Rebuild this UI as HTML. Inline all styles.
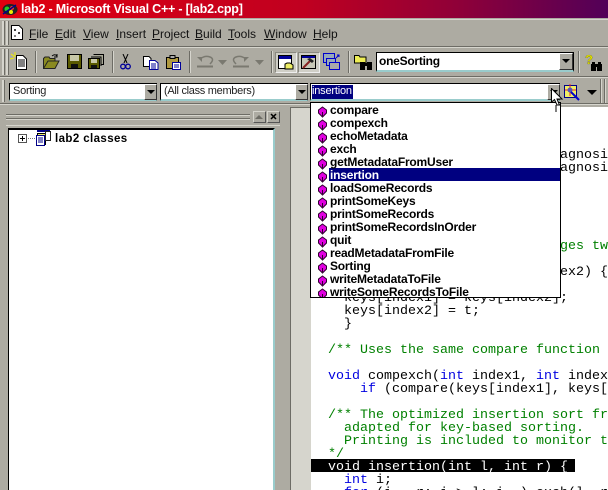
<!DOCTYPE html>
<html><head><meta charset="utf-8"><style>
html,body{margin:0;padding:0;background:#adaba2}
#r{position:relative;width:608px;height:490px;overflow:hidden;background:#adaba2;font-family:"Liberation Sans",sans-serif;font-size:12px;color:#000}
#r div,#r span.a,#r svg{position:absolute}
.t{white-space:pre;line-height:13px}
.m{font-size:12px;line-height:14px;top:27px;white-space:pre;color:#111}
.l{font-size:12px;font-weight:bold;left:330px;white-space:pre;line-height:13px;letter-spacing:-.2px;color:#000}
.c{font-family:"Liberation Mono",monospace;font-size:13.33px;line-height:13px;white-space:pre;color:#000}
.b{color:#0000e0}.g{color:#008000}
.bar{background:#d6d5cd;height:1px;left:0;width:608px}
.dk{background:#6d6c65;height:1px;left:0;width:608px}
.grip{width:2px;background:#d6d5cd;border-right:1px solid #6d6c65}
.sep{width:1px;height:22px;top:51px;background:#6d6c65;border-right:1px solid #d6d5cd}
.combo{background:#fff;border-top:1px solid #000;border-left:1px solid #000;border-right:1px solid #000;border-bottom:2px solid #9cc;box-sizing:border-box}
.arr{background:#adaba2;border-left:1px solid #fff;border-top:1px solid #fff;border-right:1px solid #333;border-bottom:1px solid #333;box-sizing:border-box}
.arr:after{content:"";position:absolute;left:2px;top:5px;border:4px solid transparent;border-top:4px solid #000;border-bottom:0}
.btn{background:#adaba2;border:1px solid;border-color:#d6d5cd #555 #555 #d6d5cd;box-sizing:border-box}
.tog{top:52px;width:22px;height:21px;background:#cfcec6;box-sizing:border-box;border:1px solid #8a8980;border-right-color:#eee;border-bottom-color:#eee}
</style></head><body><div id="r">
<div style="left:0;top:0;width:608px;height:18px;background:linear-gradient(90deg,#e00010 0%,#c00020 50%,#900038 75%,#520058 100%)"></div>
<svg style="left:2px;top:3px" width="16" height="13" viewBox="0 0 16 13"><ellipse cx="8" cy="6.500" rx="7.500" ry="5.500" fill="#222"/><circle cx="5" cy="6" r="2.500" fill="#2c2"/><circle cx="10" cy="5" r="2" fill="#e33"/><circle cx="9" cy="9" r="2" fill="#ee0"/><path d="M1 11L14 2" stroke="#008" stroke-width="1.500"/></svg>
<div class="t" style="left:21px;top:2px;font-size:12.500px;line-height:15px;font-weight:bold;color:#fff;letter-spacing:-.2px">lab2 - Microsoft Visual C++ - [lab2.cpp]</div>
<div class="bar" style="top:19px"></div>
<div class="dk" style="top:46px"></div><div class="bar" style="top:47px"></div>
<div class="dk" style="top:76px"></div><div class="bar" style="top:77px"></div>
<div class="dk" style="top:103px;width:310px"></div><div class="bar" style="top:104px;width:310px"></div>

<div class="grip" style="left:2px;top:21px;height:24px"></div><div class="grip" style="left:6px;top:21px;height:24px"></div>
<div class="grip" style="left:2px;top:49px;height:26px"></div><div class="grip" style="left:6px;top:49px;height:26px"></div>
<div class="grip" style="left:2px;top:80px;height:22px"></div>

<svg style="left:11px;top:25px" width="12" height="15" viewBox="0 0 12 15"><path d="M.5.500H8L11.500 4V14.500H.5Z" fill="#fff" stroke="#000"/><path d="M3 5h2M4 4v2M7 8h2M8 7v2M3 11h2" stroke="#000"/></svg>
<span class="a m" style="left:29px"><u>F</u>ile</span>
<span class="a m" style="left:55px"><u>E</u>dit</span>
<span class="a m" style="left:83px"><u>V</u>iew</span>
<span class="a m" style="left:116px"><u>I</u>nsert</span>
<span class="a m" style="left:152px"><u>P</u>roject</span>
<span class="a m" style="left:195px"><u>B</u>uild</span>
<span class="a m" style="left:228px"><u>T</u>ools</span>
<span class="a m" style="left:264px"><u>W</u>indow</span>
<span class="a m" style="left:313px"><u>H</u>elp</span>

<!-- toolbar icons -->
<svg style="left:10px;top:52px" width="18" height="18" viewBox="0 0 18 18"><path d="M1 2L5 5M5 0V4M0 7L4 6" stroke="#ee0"/><path d="M6.500 3.500H13L16.500 7V17.500H6.500Z" fill="#fff" stroke="#000"/><path d="M8 8h7M8 10h7M8 12h7M8 14h7" stroke="#000"/></svg>
<div class="sep" style="left:35px"></div>
<svg style="left:43px;top:54px" width="17" height="15" viewBox="0 0 17 15"><path d="M.5 14.500V4.500L2 3H6L7 4.500H12V7H5L.5 14.500H12L16 7H5" fill="#8a8a20" stroke="#222"/><path d="M9 2Q12-.5 14 2M14 0V3H11" stroke="#000" fill="none"/></svg>
<svg style="left:67px;top:54px" width="15" height="15" viewBox="0 0 15 15"><rect x=".5" y=".5" width="14" height="14" fill="#5a5a00" stroke="#000"/><rect x="3" y="1" width="9" height="6" fill="#c8c8a8"/><rect x="4" y="10" width="7" height="4" fill="#111"/></svg>
<svg style="left:88px;top:54px" width="16" height="15" viewBox="0 0 16 15"><path d="M5.500.5h10v10h-2M3 3h10v9" fill="#aa9" stroke="#000"/><rect x=".5" y="4.500" width="11" height="10" fill="#5a5a00" stroke="#000"/><rect x="3" y="5" width="6" height="4" fill="#c8c8a8"/><rect x="3" y="11" width="6" height="3" fill="#111"/></svg>
<div class="sep" style="left:112px"></div>
<svg style="left:120px;top:54px" width="11" height="16" viewBox="0 0 11 16"><path d="M3 0L7 9M8 0L4 9" stroke="#000"/><circle cx="3" cy="12.500" r="2.300" fill="none" stroke="#009" stroke-width="1.300"/><circle cx="8" cy="12.500" r="2.300" fill="none" stroke="#009" stroke-width="1.300"/></svg>
<svg style="left:143px;top:56px" width="16" height="14" viewBox="0 0 16 14"><path d="M.5.500H6L8 2.500V10.500H.5Z" fill="#fff" stroke="#000"/><path d="M6.500 4.500H12L15 7V13.500H6.500Z" fill="#fff" stroke="#009"/><path d="M8 8h5M8 10h5M8 12h5" stroke="#009"/></svg>
<svg style="left:166px;top:55px" width="15" height="15" viewBox="0 0 15 15"><rect x=".5" y="2.500" width="12" height="11" fill="#b09a40" stroke="#000"/><rect x="4" y=".5" width="5" height="3" fill="#aaa" stroke="#000"/><rect x="6.500" y="7.500" width="8" height="7" fill="#fff" stroke="#009"/><path d="M8 10h5M8 12h5" stroke="#009"/></svg>
<div class="sep" style="left:189px"></div>
<svg style="left:196px;top:54px" width="70" height="15" viewBox="0 0 70 15"><path d="M4 5Q9 1 14 3T14 10" fill="none" stroke="#7a7970" stroke-width="1.500"/><path d="M1 3H6V8Z" fill="#7a7970"/><path d="M1 12.500H17" stroke="#7a7970" stroke-width="2"/><path d="M22 6H31L26.500 11Z" fill="#7a7970"/><path d="M50 5Q45 1 40 3T40 10" fill="none" stroke="#7a7970" stroke-width="1.500"/><path d="M53 3H48V8Z" fill="#7a7970"/><path d="M37 12.500H53" stroke="#7a7970" stroke-width="2"/><path d="M59 6H68L63.500 11Z" fill="#7a7970"/></svg>
<div class="sep" style="left:271px"></div>

<div class="tog" style="left:275px"></div>
<svg style="left:278px;top:55px" width="16" height="15" viewBox="0 0 16 15"><rect x=".5" y=".5" width="13" height="13" fill="#fff" stroke="#000"/><rect x="1" y="1" width="12" height="3" fill="#009"/><path d="M7 14V9L9 8H12L15 10V14Z" fill="#ee6" stroke="#000"/></svg>
<div class="tog" style="left:298px"></div>
<svg style="left:301px;top:55px" width="16" height="15" viewBox="0 0 16 15"><rect x=".5" y=".5" width="14" height="13" fill="#c8c8b8" stroke="#000"/><rect x="1" y="1" width="13" height="2" fill="#009"/><path d="M2 13L9 6" stroke="#822" stroke-width="2"/><path d="M6 4L11 8L13 6L9 3Z" fill="#222"/></svg>
<svg style="left:323px;top:53px" width="18" height="18" viewBox="0 0 18 18"><rect x=".5" y=".5" width="11" height="9" fill="#9ab" stroke="#00c"/><rect x="3.500" y="5.500" width="9" height="7" fill="#9ab" stroke="#00c"/><rect x="6.500" y="9.500" width="10" height="7" fill="#aaa" stroke="#00c"/><path d="M13 5L16 2M14 2h2v2" stroke="#00c"/></svg>
<div class="sep" style="left:348px"></div>
<svg style="left:354px;top:54px" width="19" height="16" viewBox="0 0 19 16"><path d="M.5 1.500H5L6 3H12V9H.5Z" fill="#ee5" stroke="#000"/><rect x="6" y="8" width="5" height="8" fill="#000"/><rect x="13" y="8" width="5" height="8" fill="#000"/><rect x="10" y="9" width="4" height="3" fill="#000"/></svg>

<div class="combo" style="left:376px;top:52px;width:198px;height:20px"></div>
<div class="t" style="left:379px;top:55px;font-size:12px;font-weight:bold;letter-spacing:-.25px">oneSorting</div>
<div class="arr" style="left:559px;top:53px;width:14px;height:17px"></div>
<div class="sep" style="left:578px"></div>
<svg style="left:585px;top:53px" width="18" height="19" viewBox="0 0 18 19"><text x="0" y="11" font-family="Liberation Sans" font-size="13" font-weight="bold" fill="#e8e800" stroke="#660" stroke-width=".3">?</text><rect x="6" y="11" width="5" height="7" fill="#000"/><rect x="12" y="11" width="5" height="7" fill="#000"/><rect x="10" y="11" width="3" height="3" fill="#000"/><rect x="7" y="9" width="3" height="3" fill="#000"/><rect x="13" y="9" width="3" height="3" fill="#000"/></svg>

<!-- wizard bar -->
<div class="combo" style="left:9px;top:83px;width:148px;height:18px"></div>
<div class="t" style="left:13px;top:85px;font-size:11px;letter-spacing:-.25px;color:#222">Sorting</div>
<div class="arr" style="left:144px;top:84px;width:13px;height:16px"></div>
<div class="combo" style="left:160px;top:83px;width:148px;height:18px"></div>
<div class="t" style="left:164px;top:85px;font-size:11px;letter-spacing:-.3px;color:#222">(All class members)</div>
<div class="arr" style="left:295px;top:84px;width:13px;height:16px"></div>
<div class="combo" style="left:310px;top:83px;width:250px;height:18px"></div>
<div class="t" style="left:312px;top:85px;font-size:11px;letter-spacing:-.2px;color:#fff;background:#000080;padding:0 1px 1px 0">insertion</div>
<div class="arr" style="left:547px;top:84px;width:13px;height:16px"></div>
<svg style="left:564px;top:84px" width="17" height="17" viewBox="0 0 17 17"><rect x=".5" y="1.500" width="12" height="12" fill="#ee6" stroke="#008"/><path d="M6 0V12M1 6H12" stroke="#e22"/><circle cx="6" cy="6" r="2.500" fill="#55b"/><path d="M7 8L15 16" stroke="#00c" stroke-width="2"/></svg>
<div style="left:587px;top:90px;border:5px solid transparent;border-top:5px solid #000;border-bottom:0"></div>
<div style="left:600px;top:79px;width:1px;height:24px;background:#6d6c65;border-right:1px solid #d6d5cd"></div>
<div style="left:604px;top:79px;width:1px;height:24px;background:#6d6c65;border-right:1px solid #d6d5cd"></div>
<div style="left:560px;top:103px;width:48px;height:1px;background:#6d6c65"></div>
<div style="left:560px;top:104px;width:48px;height:1px;background:#d6d5cd"></div>

<!-- left panel -->
<div class="bar" style="left:6px;width:244px;top:114px;background:#6d6c65"></div><div class="bar" style="left:6px;width:244px;top:115px"></div>
<div class="bar" style="left:6px;width:244px;top:118px;background:#6d6c65"></div><div class="bar" style="left:6px;width:244px;top:119px"></div>
<div class="btn" style="left:253px;top:111px;width:13px;height:12px"></div>
<div style="left:255px;top:115px;border:4px solid transparent;border-bottom:4px solid #6d6c65;border-top:0"></div>
<div class="btn" style="left:267px;top:111px;width:13px;height:12px"></div>
<svg style="left:267px;top:111px" width="13" height="12" viewBox="0 0 13 12"><path d="M4 3L9 8M9 3L4 8" stroke="#000" stroke-width="1.500"/></svg>
<div style="left:6px;top:125px;width:274px;height:1px;background:#d6d5cd"></div>
<div style="left:8px;top:128px;width:267px;height:362px;background:#fff;border-left:1px solid #000;border-top:2px solid #000;border-right:2px solid #9cc;box-sizing:border-box"></div>
<svg style="left:18px;top:130px" width="34" height="16" viewBox="0 0 34 16"><rect x=".5" y="4.500" width="8" height="8" fill="#fff" stroke="#555"/><path d="M2 8.500H7M4.500 6V11" stroke="#000"/><path d="M10 8.500H18" stroke="#777" stroke-dasharray="1 1"/><rect x="19.500" y="3.500" width="8" height="11" fill="#ee6" stroke="#000"/><rect x="18.500" y="5.500" width="8" height="10" fill="#fff" stroke="#008"/><path d="M20 8h5M20 10h5M20 12h5" stroke="#008"/><rect x="19" y="0" width="13" height="2" fill="#008"/><rect x="27.500" y="1.500" width="5" height="9" fill="#fff" stroke="#222"/></svg>
<div class="t" style="left:55px;top:133px;font-size:11.500px;font-weight:bold;letter-spacing:.4px">lab2 classes</div>

<!-- editor -->
<div style="left:290px;top:107px;width:21px;height:383px;background:#d6d5cd;border-left:1px solid #6d6c65;border-top:1px solid #6d6c65;box-sizing:border-box"></div>
<div style="left:311px;top:107px;width:297px;height:383px;background:#fff"></div>

<div class="c" style="left:560px;top:149px">agnosi</div>
<div class="c" style="left:560px;top:162px">agnosi</div>
<div class="c g" style="left:560px;top:240px">ges tw</div>
<div class="c" style="left:560px;top:266px">ex2) {</div>
<div class="c" style="left:344px;top:292px">keys[index1] = keys[index2];</div>
<div class="c" style="left:344px;top:305px">keys[index2] = t;</div>
<div class="c" style="left:344px;top:318px">}</div>
<div class="c g" style="left:328px;top:344px">/** Uses the same compare function for</div>
<div class="c" style="left:328px;top:370px"><span class="b">void</span> compexch(<span class="b">int</span> index1, <span class="b">int</span> index2) {</div>
<div class="c" style="left:360px;top:383px"><span class="b">if</span> (compare(keys[index1], keys[index2])</div>
<div class="c g" style="left:328px;top:409px">/** The optimized insertion sort from</div>
<div class="c g" style="left:344px;top:422px">adapted for key-based sorting.</div>
<div class="c g" style="left:344px;top:435px">Printing is included to monitor the</div>
<div class="c g" style="left:328px;top:448px">*/</div>
<div style="left:311px;top:459px;width:264px;height:13px;background:#000"></div>
<div class="c" style="left:328px;top:461px;color:#fff">void insertion(int l, int r) {</div>
<div class="c" style="left:344px;top:474px"><span class="b">int</span> i;</div>
<div class="c" style="left:344px;top:487px"><span class="b">for</span> (i = r; i &gt; l; i--) exch(l, r);</div>

<!-- dropdown -->
<div style="left:310px;top:102px;width:251px;height:196px;background:#fff;border:1px solid #000;box-sizing:border-box"></div>
<div style="left:329px;top:168px;width:231px;height:13px;background:#000080"></div>
<div class="l" style="top:104px">compare</div>
<div class="l" style="top:117px">compexch</div>
<div class="l" style="top:130px">echoMetadata</div>
<div class="l" style="top:143px">exch</div>
<div class="l" style="top:156px">getMetadataFromUser</div>
<div class="l" style="top:169px;color:#fff">insertion</div>
<div class="l" style="top:182px">loadSomeRecords</div>
<div class="l" style="top:195px">printSomeKeys</div>
<div class="l" style="top:208px">printSomeRecords</div>
<div class="l" style="top:221px">printSomeRecordsInOrder</div>
<div class="l" style="top:234px">quit</div>
<div class="l" style="top:247px">readMetadataFromFile</div>
<div class="l" style="top:260px">Sorting</div>
<div class="l" style="top:273px">writeMetadataToFile</div>
<div class="l" style="top:286px">writeSomeRecordsToFile</div>
<svg style="left:318px;top:104px" width="9" height="193" viewBox="0 0 9 193"><defs><g id="d"><path d="M4.500 3L8.500 6V9L4.500 13L.5 9V6Z" fill="#e000e0" stroke="#300030"/><path d="M4.500 8V12" stroke="#300030"/></g></defs>
<use href="#d" y="0"/><use href="#d" y="13"/><use href="#d" y="26"/><use href="#d" y="39"/><use href="#d" y="52"/><use href="#d" y="65"/><use href="#d" y="78"/><use href="#d" y="91"/><use href="#d" y="104"/><use href="#d" y="117"/><use href="#d" y="130"/><use href="#d" y="143"/><use href="#d" y="156"/><use href="#d" y="169"/><use href="#d" y="182"/></svg>

<!-- cursor -->
<svg style="left:551px;top:88px" width="13" height="24" viewBox="0 0 13 24"><path d="M.5.500V14L3.500 11.500L6 17H8.500L6 11H11Z" fill="#fff" stroke="#000"/><path d="M5 17V24" stroke="#000"/></svg>
</div></body></html>
